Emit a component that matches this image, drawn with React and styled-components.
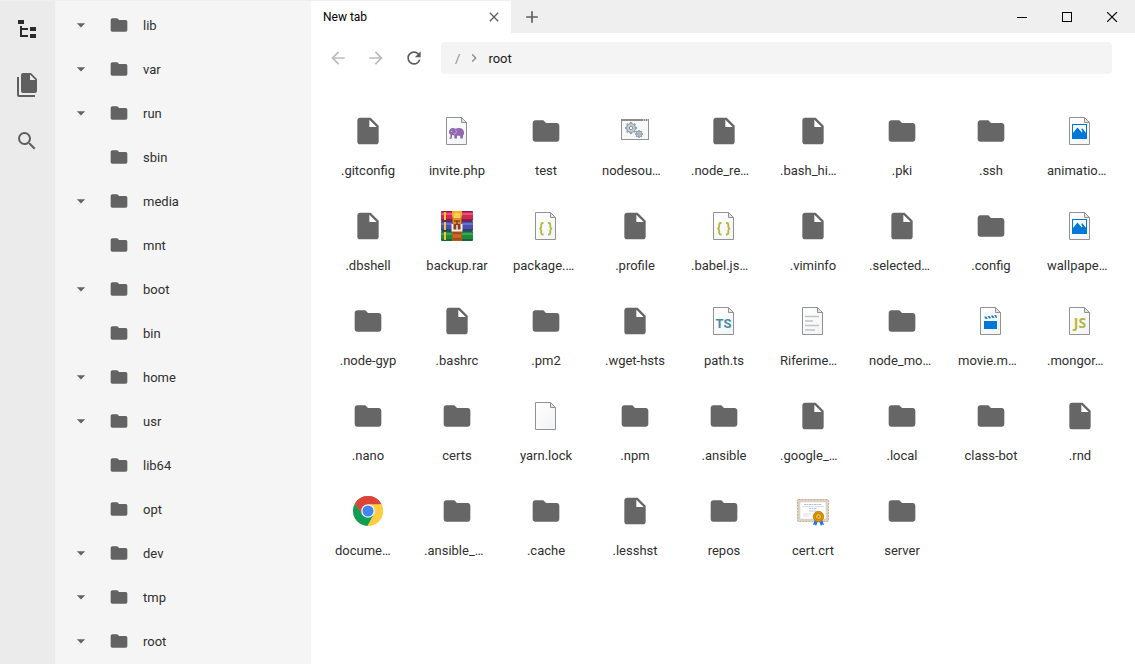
import React from "react";
import styled, { createGlobalStyle } from "styled-components";

const GlobalStyle = createGlobalStyle`
  * { box-sizing: border-box; }
  body { margin: 0; font-family: Roboto, "Liberation Sans", sans-serif; color: #000; background: #fff; }
  button { border: 0; margin: 0; padding: 0; background: none; font: inherit; color: inherit; cursor: pointer; }
  svg { display: block; flex: none; }
`;

const Shell = styled.div`
  display: flex;
  height: 100vh;
  overflow: hidden;
  border-top: 1px solid #efefef;
`;

const ActivityBar = styled.nav`
  flex: none;
  width: 55px;
  background: #ebebeb;
`;

const ActivityButton = styled.button`
  display: flex;
  align-items: center;
  width: 100%;
  height: 56px;
  padding-left: 15px;
  color: ${(p) => (p.$active ? "#2b2b2b" : "#5f5f5f")};
`;

const TreePane = styled.aside`
  flex: none;
  width: 256px;
  padding-top: 2px;
  background: #f5f5f5;
  overflow: hidden;
`;

const TreeRow = styled.button`
  display: flex;
  align-items: center;
  width: 100%;
  height: 44px;
  padding-left: 16px;
  color: #636363;
`;

const ArrowSlot = styled.span`
  width: 20px;
  margin-right: 18px;
  visibility: ${(p) => (p.$shown ? "visible" : "hidden")};
`;

const TreeLabel = styled.span`
  margin-left: 14px;
  padding-top: 2px;
  font-size: 13px;
  line-height: 16px;
  color: #2f2f2f;
`;

const Main = styled.main`
  flex: 1;
  min-width: 0;
  display: flex;
  flex-direction: column;
`;

const TitleBar = styled.header`
  display: flex;
  height: 32px;
  background: #efefef;
`;

const Tab = styled.div`
  display: flex;
  align-items: center;
  justify-content: space-between;
  width: 200px;
  padding: 0 9px 0 12px;
  font-size: 12px;
  line-height: 16px;
  background: #fff;
`;

const TabButton = styled.button`
  display: flex;
  align-items: center;
  justify-content: center;
  width: ${(p) => p.$width || 16}px;
  height: 100%;
  color: #5f5f5f;
`;

const WindowControls = styled.div`
  display: flex;
  margin-left: auto;
`;

const WindowButton = styled.button`
  display: flex;
  align-items: center;
  justify-content: center;
  width: 45px;
  height: 100%;
`;

const Toolbar = styled.div`
  display: flex;
  align-items: center;
  height: 50px;
  padding: 0 23px 0 8px;
`;

const NavButton = styled.button`
  display: flex;
  align-items: center;
  justify-content: center;
  width: 38px;
  height: 32px;
  color: ${(p) => (p.$dim ? "#bcbcbc" : "#5c5c5c")};
`;

const AddressBar = styled.nav`
  display: flex;
  align-items: center;
  flex: 1;
  height: 32px;
  margin-left: 8px;
  padding-left: 14px;
  border-radius: 4px;
  background: #f4f4f4;
  color: #8a8a8a;
`;

const Crumb = styled.button`
  padding-top: 2px;
  font-size: 13px;
  line-height: 16px;
  color: ${(p) => (p.$current ? "#1a1a1a" : "#8a8a8a")};
`;

const CrumbArrow = styled.span`
  margin: 0 6px;
`;

const FileGrid = styled.section`
  display: grid;
  grid-template-columns: repeat(auto-fill, 88px);
  gap: 8px 1px;
  padding: 20px 8px 20px 13px;
`;

const FileCell = styled.button`
  display: flex;
  flex-direction: column;
  align-items: center;
  height: 87px;
  padding: 12px 11px 0;
  color: #666;
`;

const FileName = styled.span`
  align-self: ${(p) => (p.$shortened ? "flex-start" : "center")};
  margin-top: 16px;
  white-space: nowrap;
  font-size: 13px;
  line-height: 16px;
  color: #303030;
`;

const Icon = ({ d, size = 24 }) => (
  <svg width={size} height={size} viewBox="0 0 24 24" fill="currentColor" aria-hidden="true">
    <path d={d} />
  </svg>
);

const paths = {
  fileTree: "M3 3h6v4H3V3m12 7h6v4h-6v-4m0 7h6v4h-6v-4m-2-4H7v5h6v2H5V9h2v2h6v2z",
  copies: "M15 7h5.5L15 1.5V7M8 0h8l6 6v12a2 2 0 0 1-2 2H8c-1.11 0-2-.9-2-2V2a2 2 0 0 1 2-2M4 4v18h16v2H4a2 2 0 0 1-2-2V4h2z",
  search: "M15.5 14h-.79l-.28-.27A6.471 6.471 0 0 0 16 9.5 6.5 6.5 0 1 0 9.5 16c1.61 0 3.09-.59 4.23-1.57l.27.28v.79l5 4.99L20.49 19l-4.99-5zm-6 0C7.01 14 5 11.99 5 9.5S7.01 5 9.5 5 14 7.01 14 9.5 11.99 14 9.5 14z",
  dropDown: "M7 10l5 5 5-5z",
  folder: "M10 4H4c-1.1 0-1.99.9-1.99 2L2 18c0 1.1.9 2 2 2h16c1.1 0 2-.9 2-2V8c0-1.1-.9-2-2-2h-8l-2-2z",
  file: "M6 2c-1.1 0-1.99.9-1.99 2L4 20c0 1.1.89 2 1.99 2H18c1.1 0 2-.9 2-2V8l-6-6H6zm7 7V3.5L18.5 9H13z",
  close: "M19 6.41L17.59 5 12 10.59 6.41 5 5 6.41 10.59 12 5 17.59 6.41 19 12 13.41 17.59 19 19 17.59 13.41 12z",
  plus: "M19 13h-6v6h-2v-6H5v-2h6V5h2v6h6v2z",
  back: "M20 11H7.83l5.59-5.59L12 4l-8 8 8 8 1.41-1.41L7.83 13H20v-2z",
  forward: "M12 4l-1.41 1.41L16.17 11H4v2h12.17l-5.58 5.59L12 20l8-8z",
  refresh: "M17.65 6.35A7.958 7.958 0 0 0 12 4c-4.42 0-7.99 3.58-7.99 8s3.57 8 7.99 8c3.73 0 6.84-2.55 7.73-6h-2.08A5.99 5.99 0 0 1 12 18c-3.31 0-6-2.69-6-6s2.69-6 6-6c1.66 0 3.14.69 4.22 1.78L13 11h7V4l-2.35 2.35z",
  chevron: "M10 6L8.59 7.41 13.17 12l-4.58 4.59L10 18l6-6z",
};

const Art = ({ children }) => (
  <svg width="32" height="32" viewBox="0 0 32 32" aria-hidden="true">{children}</svg>
);

const Page = ({ children }) => (
  <Art>
    <defs>
      <linearGradient id="paper" x1="0" y1="0" x2="1" y2="1">
        <stop offset="0" stopColor="#fff" />
        <stop offset="1" stopColor="#f1f3f5" />
      </linearGradient>
    </defs>
    <path d="M5.5 2.5H20.5L25.5 7.5V29.5H5.5Z" fill="url(#paper)" stroke="#929292" />
    <path d="M20.5 2.5V7.5H25.5Z" fill="#e4e4e4" stroke="#929292" />
    {children}
  </Art>
);

const Gear = ({ x, y, r, hole }) => (
  <g transform={`translate(${x} ${y})`}>
    {[0, 45, 90, 135].map((angle) => (
      <rect key={angle} x={-r / 5} y={-r} width={(r * 2) / 5} height={r * 2} fill="#93a0a9" transform={`rotate(${angle})`} />
    ))}
    <circle r={r * 0.74} fill="#c4ced5" stroke="#93a0a9" />
    <circle r={hole} fill="#fff" stroke="#8593a0" />
  </g>
);

const Band = ({ y, light, mid, dark }) => (
  <g>
    <rect x="0" y={y} width="32" height="10" rx="1" fill={dark} />
    <rect x="0" y={y + 1} width="32" height="7" fill={mid} />
    <rect x="0" y={y + 2} width="32" height="2" fill={light} />
    <rect x="3" y={y + 1} width="2" height="8" fill="#f5c431" />
  </g>
);

const art = {
  folder: () => <Icon d={paths.folder} size={32} />,
  file: () => <Icon d={paths.file} size={32} />,
  page: () => <Page />,
  php: () => (
    <Page>
      <path fill="#9068b0" d="M8 17.5C8 14.5 9.5 13 12 13c1 0 1.800.2 2.500.7 1-.5 2.200-.7 3.500-.7 3.200 0 5 1.800 5 4.800v2.400l-.8-.9-.4 4.200h-2.600v-2.800h-3.200v2.800h-2.700v-3.200c-1 .1-1.700-.1-2.300-.4v2.400c0 1-.6 1.600-1.500 1.600-.8 0-1.300-.5-1.300-1.200h1.200V19.500C8.400 19 8 18.300 8 17.500z" />
      <path d="M14.400 14.500c1.200 1.200 1.300 3.300-.2 4.500-1 .1-1.600-.3-1.900-.9" fill="none" stroke="#cdb9de" strokeWidth=".7" />
      <circle cx="10.700" cy="16.300" r=".6" fill="#e4d9ee" />
    </Page>
  ),
  exe: () => (
    <Art>
      <rect x="2.500" y="4.500" width="27" height="20" fill="#f7f8f8" stroke="#929292" />
      <rect x="2" y="4" width="28" height="2" fill="#8c8c8c" />
      <path d="M24 5h1m1 0h1m1 0h1" stroke="#fff" />
      <Gear x={12} y={13} r={6} hole={1.7} />
      <Gear x={20} y={19} r={4} hole={1.2} />
    </Art>
  ),
  braces: () => (
    <Page>
      <path d="M13.500 13h-.8c-1 0-1.500.5-1.500 1.500v2.300c0 1-.5 1.700-1.700 1.900 1.200.2 1.700.9 1.700 1.900v2.400c0 1 .5 1.500 1.500 1.500h.8M18 13h.8c1 0 1.500.5 1.500 1.500v2.300c0 1 .5 1.700 1.700 1.900-1.200.2-1.700.9-1.700 1.900v2.400c0 1-.5 1.500-1.500 1.500H18" fill="none" stroke="#b7b73b" strokeWidth="1.800" />
    </Page>
  ),
  ts: () => (
    <Page>
      <text x="15.500" y="23" textAnchor="middle" fontFamily="Roboto" fontWeight="700" fontSize="13" fill="#498ba7">TS</text>
    </Page>
  ),
  js: () => (
    <Page>
      <text x="16" y="23" textAnchor="middle" fontFamily="Open Sans" fontWeight="700" fontSize="14" fill="#b7b73b">JS</text>
    </Page>
  ),
  text: () => (
    <Page>
      <path d="M8 11.500h14M8 16h8M8 20.500h14M8 25h10" stroke="#c2c2c2" strokeWidth="1.500" />
    </Page>
  ),
  image: () => (
    <Page>
      <rect x="8.500" y="9.500" width="14" height="14" fill="#f4fafe" stroke="#0078d7" />
      <path d="M9 18l4.500-5.500 4.300 5 .7-1-1.300-2.300 1-1L23 19v5H8z" fill="#0078d7" />
    </Page>
  ),
  video: () => (
    <Page>
      <rect x="9" y="16" width="13" height="8" fill="#0078d7" />
      <path d="M9 11.800l2-.2 1.800 2.200-2 .2zM12.400 11.300l2-.2 1.800 2.200-2 .2zM15.800 10.800l2-.2 1.800 2.200-2 .2zM19.200 10.300l2-.2.8 2.600-1 .2z" fill="#0078d7" />
    </Page>
  ),
  rar: () => (
    <Art>
      <Band y={1} light="#e8527c" mid="#cb2b50" dark="#96183a" />
      <Band y={11} light="#6a70cc" mid="#4c51ab" dark="#333a86" />
      <Band y={21} light="#3fa455" mid="#1e8a3c" dark="#136a2c" />
      <rect x="11" y="1" width="10" height="30" fill="#b85a1c" />
      <path d="M11 1h10v5l-1 2H12l-1-2z" fill="#efb02e" />
      <path d="M13 4q3-2.500 6 0v4h-6z" fill="#f8cf4f" />
      <rect x="12" y="8" width="8" height="6" fill="#d98a3a" />
      <path d="M13 11h6M16 11v6" stroke="#6b2c0b" strokeWidth="1.200" />
      <path d="M11.500 14v6.500h9V14" fill="#8d3d10" stroke="#f2f2f2" strokeWidth="2" />
      <path d="M16 15v5" stroke="#e6e6e6" strokeWidth="1.500" />
      <path d="M12 23h8M12 29h8" stroke="#8f431a" />
      <rect x="12" y="24.500" width="8" height="3" fill="#c96b28" />
    </Art>
  ),
  chrome: () => (
    <Art>
      <circle cx="16" cy="16" r="15" fill="#ffcd40" />
      <path d="M16 16L29 8.500A15 15 0 0 0 3 8.500L9.900 19.500z" fill="#db4437" />
      <path d="M16 9.200h13.400L29 8.500A15 15 0 0 0 3 8.500L16 16z" fill="#db4437" />
      <path d="M3 8.500A15 15 0 0 0 15.500 31L21.900 19.400 16 16 10.100 19.400z" fill="#0f9d58" />
      <path d="M16 9.200h13.400A15 15 0 0 1 15.500 31L21.900 19.400z" fill="#ffcd40" />
      <circle cx="16" cy="16" r="6.800" fill="#f1f1f1" />
      <circle cx="16" cy="16" r="5.500" fill="#4285f4" />
    </Art>
  ),
  cert: () => (
    <Art>
      <rect x=".5" y="4.500" width="31" height="22" rx="1" fill="#ddd2c0" stroke="#bfb19b" strokeDasharray="2 1" />
      <rect x="3" y="7" width="26" height="17" fill="#fff" stroke="#d5d0c8" strokeWidth=".5" />
      <path d="M7 9.500h18M12 13.500h8M12 16h8" stroke="#b9bfdb" strokeWidth="1" strokeDasharray="2 .5" />
      <path d="M5 11.500h22M6 19h8M6 21h6" stroke="#dcdfea" strokeWidth="1" />
      <path d="M18 24l-2 6 2-.5 1 1.500 2.500-6zM25 24l2 6-2-.5-1 1.500-2.500-6z" fill="#2c72e8" />
      <circle cx="21.500" cy="21.500" r="5.200" fill="#dc960b" stroke="#b97505" strokeWidth=".8" />
      <circle cx="21.500" cy="21.500" r="3" fill="#f6c334" stroke="#b06f08" strokeWidth=".8" />
      <circle cx="21.500" cy="21.500" r="1" fill="#b97505" />
    </Art>
  ),
};

const tree = [
  ["lib", true], ["var", true], ["run", true], ["sbin", false], ["media", true],
  ["mnt", false], ["boot", true], ["bin", false], ["home", true], ["usr", true],
  ["lib64", false], ["opt", false], ["dev", true], ["tmp", true], ["root", true],
];

const files = [
  [".gitconfig", "file"], ["invite.php", "php"], ["test", "folder"], ["nodesou…", "exe"],
  [".node_re…", "file"], [".bash_hi…", "file"], [".pki", "folder"], [".ssh", "folder"], ["animatio…", "image"],
  [".dbshell", "file"], ["backup.rar", "rar"], ["package.…", "braces"], [".profile", "file"],
  [".babel.js…", "braces"], [".viminfo", "file"], [".selected…", "file"], [".config", "folder"], ["wallpape…", "image"],
  [".node-gyp", "folder"], [".bashrc", "file"], [".pm2", "folder"], [".wget-hsts", "file"],
  ["path.ts", "ts"], ["Riferime…", "text"], ["node_mo…", "folder"], ["movie.m…", "video"], [".mongor…", "js"],
  [".nano", "folder"], ["certs", "folder"], ["yarn.lock", "page"], [".npm", "folder"],
  [".ansible", "folder"], [".google_…", "file"], [".local", "folder"], ["class-bot", "folder"], [".rnd", "file"],
  ["docume…", "chrome"], [".ansible_…", "folder"], [".cache", "folder"], [".lesshst", "file"],
  ["repos", "folder"], ["cert.crt", "cert"], ["server", "folder"],
];

export default function App() {
  return (
    <>
      <GlobalStyle />
      <Shell>
        <ActivityBar>
          <ActivityButton $active aria-label="Folders"><Icon d={paths.fileTree} /></ActivityButton>
          <ActivityButton aria-label="Files"><Icon d={paths.copies} /></ActivityButton>
          <ActivityButton aria-label="Search"><Icon d={paths.search} /></ActivityButton>
        </ActivityBar>
        <TreePane>
          {tree.map(([name, expandable]) => (
            <TreeRow key={name}>
              <ArrowSlot $shown={expandable}><Icon d={paths.dropDown} size={20} /></ArrowSlot>
              <Icon d={paths.folder} size={20} />
              <TreeLabel>{name}</TreeLabel>
            </TreeRow>
          ))}
        </TreePane>
        <Main>
          <TitleBar>
            <Tab>
              <span>New tab</span>
              <TabButton aria-label="Close tab"><Icon d={paths.close} size={16} /></TabButton>
            </Tab>
            <TabButton $width={42} aria-label="Add tab"><Icon d={paths.plus} size={20} /></TabButton>
            <WindowControls>
              <WindowButton aria-label="Minimize">
                <svg width="11" height="10" viewBox="0 0 11 10"><rect y="5" width="10" height="1" /></svg>
              </WindowButton>
              <WindowButton aria-label="Maximize">
                <svg width="11" height="10" viewBox="0 0 11 10"><rect x=".5" y=".5" width="9" height="9" fill="none" stroke="#000" /></svg>
              </WindowButton>
              <WindowButton aria-label="Close">
                <svg width="11" height="10" viewBox="0 0 11 10"><path d="M0 0l10 10M10 0L0 10" stroke="#000" strokeWidth="1.100" /></svg>
              </WindowButton>
            </WindowControls>
          </TitleBar>
          <Toolbar>
            <NavButton $dim aria-label="Back"><Icon d={paths.back} size={20} /></NavButton>
            <NavButton $dim aria-label="Forward"><Icon d={paths.forward} size={20} /></NavButton>
            <NavButton aria-label="Refresh"><Icon d={paths.refresh} size={20} /></NavButton>
            <AddressBar aria-label="Path">
              <Crumb>/</Crumb>
              <CrumbArrow><Icon d={paths.chevron} size={16} /></CrumbArrow>
              <Crumb $current>root</Crumb>
            </AddressBar>
          </Toolbar>
          <FileGrid>
            {files.map(([name, kind]) => {
              const Picture = art[kind];
              return (
                <FileCell key={name}>
                  <Picture />
                  <FileName $shortened={name.endsWith("…")}>{name}</FileName>
                </FileCell>
              );
            })}
          </FileGrid>
        </Main>
      </Shell>
    </>
  );
}
